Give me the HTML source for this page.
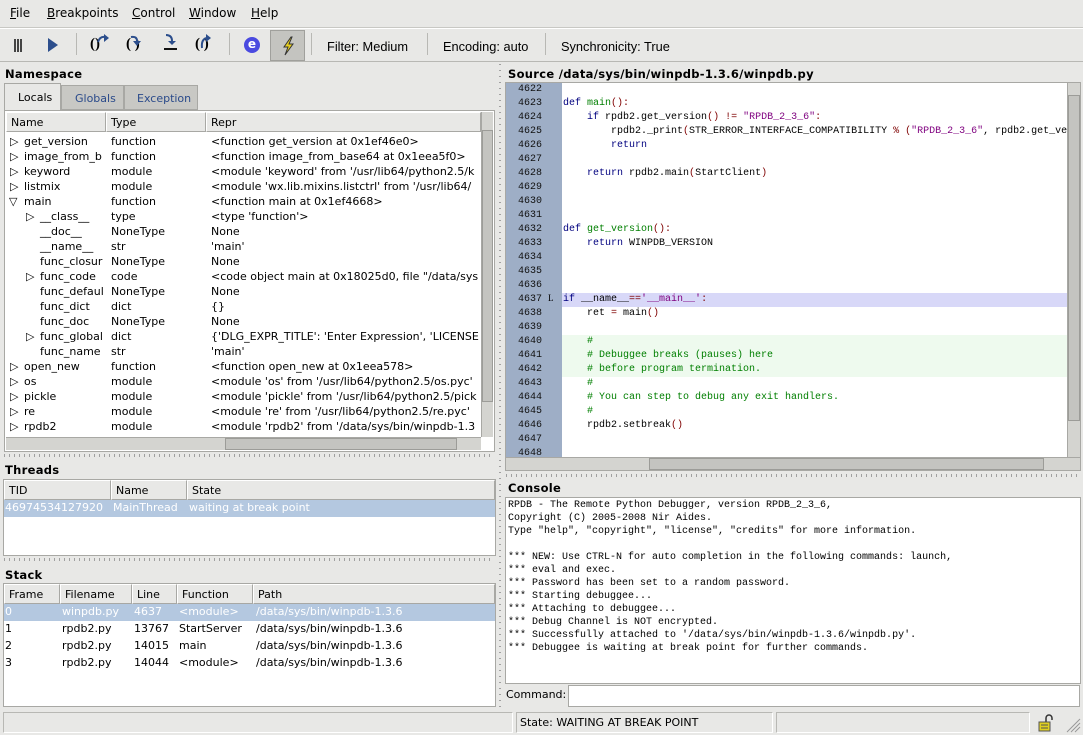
<!DOCTYPE html>
<html><head><meta charset="utf-8"><style>
*{margin:0;padding:0;box-sizing:border-box}
body{width:1083px;height:735px;overflow:hidden;background:#e8e8e6;font-family:"DejaVu Sans","Liberation Sans",sans-serif;font-size:11px;color:#000;position:relative}
.a{position:absolute;white-space:nowrap}
.m{font-family:"Liberation Mono",monospace;font-size:10px}
.hd{position:absolute;height:20px;background:#e8e8e6;border:1px solid #a8a8a4;border-left-color:#fff;border-top-color:#fff;padding:3px 4px;white-space:nowrap;overflow:hidden}
.tb{font-weight:bold;font-size:11.5px;letter-spacing:.3px}
.sep{position:absolute;width:1px;background:#b8b8b4}
.dots{position:absolute;height:3px;background:repeating-linear-gradient(90deg,#a0a0a0 0 1px,transparent 1px 5px)}
.vd{position:absolute;width:2px;background:repeating-linear-gradient(180deg,#a0a0a0 0 1px,transparent 1px 6px)}
.r{position:absolute;left:0;height:15px;width:480px}
.r span{position:absolute;top:0;white-space:nowrap}
u{text-decoration:underline}
.kw{color:#00007f}.fn{color:#007f00}.st{color:#7f007f}.op{color:#7f0000}.cm{color:#007f00}
</style></head><body>
<div class="a" style="left:10px;top:6px;font-size:12px"><u>F</u>ile</div>
<div class="a" style="left:47px;top:6px;font-size:12px"><u>B</u>reakpoints</div>
<div class="a" style="left:132px;top:6px;font-size:12px"><u>C</u>ontrol</div>
<div class="a" style="left:189px;top:6px;font-size:12px"><u>W</u>indow</div>
<div class="a" style="left:251px;top:6px;font-size:12px"><u>H</u>elp</div>
<div class="a" style="left:0;top:27px;width:1083px;height:1px;background:#c8c8c4"></div>
<div class="a" style="left:0;top:28px;width:1083px;height:1px;background:#fff"></div>
<div class="a" style="left:14px;top:39px;width:8px;height:13px;background:repeating-linear-gradient(90deg,#444 0 2px,transparent 2px 3px)"></div>
<svg class="a" style="left:46px;top:37px" width="14" height="16"><path d="M2 1 L12 8 L2 15Z" fill="#2c4e8c"/></svg>
<div class="sep" style="left:76px;top:33px;height:22px"></div>
<div class="a" style="left:90px;top:36px;font-family:'Liberation Serif';font-weight:bold;font-size:15px">()</div>
<svg class="a" style="left:96px;top:34px" width="14" height="12"><path d="M2 8 Q4 2 9 3" stroke="#2c4e8c" stroke-width="2" fill="none"/><path d="M8 0 L13 4 L8 8Z" fill="#2c4e8c"/></svg>
<div class="a" style="left:126px;top:36px;font-family:'Liberation Serif';font-weight:bold;font-size:15px">( )</div>
<svg class="a" style="left:129px;top:34px" width="12" height="14"><path d="M2 3 Q8 2 8 7" stroke="#2c4e8c" stroke-width="2" fill="none"/><path d="M4 7 L12 7 L8 12Z" fill="#2c4e8c"/></svg>
<svg class="a" style="left:162px;top:34px" width="16" height="18"><path d="M4 1 Q10 1 10 7" stroke="#2c4e8c" stroke-width="2" fill="none"/><path d="M6 7 L14 7 L10 11Z" fill="#2c4e8c"/><rect x="2" y="14" width="13" height="2" fill="#111"/></svg>
<div class="a" style="left:195px;top:36px;font-family:'Liberation Serif';font-weight:bold;font-size:15px">(&nbsp;)</div>
<svg class="a" style="left:198px;top:34px" width="14" height="16"><path d="M4 14 Q3 5 9 4" stroke="#2c4e8c" stroke-width="2" fill="none"/><path d="M8 0 L13 4 L8 8Z" fill="#2c4e8c"/></svg>
<div class="sep" style="left:229px;top:33px;height:22px"></div>
<div class="a" style="left:244px;top:37px;width:16px;height:16px;border-radius:50%;background:#4a4ae0;color:#fff;font-weight:bold;font-size:12px;text-align:center;line-height:15px">e</div>
<div class="a" style="left:270px;top:30px;width:35px;height:31px;background:#c4c4c0;border:1px solid #a0a09c"></div>
<svg class="a" style="left:280px;top:36px" width="16" height="20"><path d="M11 1 L4 11 L8 11 L5 19 L13 8 L9 8 L12 1Z" fill="#e8d020" stroke="#333" stroke-width="1"/></svg>
<div class="sep" style="left:311px;top:33px;height:22px"></div>
<div class="a" style="left:327px;top:39px;font-family:'Liberation Sans';font-size:12.8px">Filter: Medium</div>
<div class="sep" style="left:427px;top:33px;height:22px"></div>
<div class="a" style="left:443px;top:39px;font-family:'Liberation Sans';font-size:12.8px">Encoding: auto</div>
<div class="sep" style="left:545px;top:33px;height:22px"></div>
<div class="a" style="left:561px;top:39px;font-family:'Liberation Sans';font-size:12.8px">Synchronicity: True</div>
<div class="a" style="left:0;top:61px;width:1083px;height:1px;background:#b8b8b4"></div>
<div class="vd" style="left:499px;top:64px;height:645px"></div>

<div class="a tb" style="left:5px;top:67px">Namespace</div>
<div class="a" style="left:4px;top:83px;width:57px;height:28px;background:#e8e8e6;border:1px solid #a8a8a4;border-bottom:none;padding:7px 0 0 13px">Locals</div>
<div class="a" style="left:61px;top:85px;width:63px;height:25px;background:#c8c8c4;border:1px solid #a8a8a4;color:#2a4a8a;padding:6px 0 0 13px">Globals</div>
<div class="a" style="left:124px;top:85px;width:74px;height:25px;background:#c8c8c4;border:1px solid #a8a8a4;color:#2a4a8a;padding:6px 0 0 12px">Exception</div>
<div class="a" style="left:4px;top:110px;width:491px;height:342px;border:1px solid #a8a8a4;background:#fff"></div>
<div class="hd" style="left:6px;top:112px;width:100px">Name</div>
<div class="hd" style="left:106px;top:112px;width:100px">Type</div>
<div class="hd" style="left:206px;top:112px;width:275px">Repr</div>
<div class="a" style="left:6px;top:132px;width:475px;height:305px;overflow:hidden">
<div class="r" style="top:3px"><span style="left:4px">▷</span><span style="left:18px">get_version</span><span style="left:105px">function</span><span style="left:205px">&lt;function get_version at 0x1ef46e0&gt;</span></div>
<div class="r" style="top:18px"><span style="left:4px">▷</span><span style="left:18px">image_from_b</span><span style="left:105px">function</span><span style="left:205px">&lt;function image_from_base64 at 0x1eea5f0&gt;</span></div>
<div class="r" style="top:33px"><span style="left:4px">▷</span><span style="left:18px">keyword</span><span style="left:105px">module</span><span style="left:205px">&lt;module 'keyword' from '/usr/lib64/python2.5/k</span></div>
<div class="r" style="top:48px"><span style="left:4px">▷</span><span style="left:18px">listmix</span><span style="left:105px">module</span><span style="left:205px">&lt;module 'wx.lib.mixins.listctrl' from '/usr/lib64/</span></div>
<div class="r" style="top:63px"><span style="left:3px">▽</span><span style="left:18px">main</span><span style="left:105px">function</span><span style="left:205px">&lt;function main at 0x1ef4668&gt;</span></div>
<div class="r" style="top:78px"><span style="left:20px">▷</span><span style="left:34px">__class__</span><span style="left:105px">type</span><span style="left:205px">&lt;type 'function'&gt;</span></div>
<div class="r" style="top:93px"><span style="left:34px">__doc__</span><span style="left:105px">NoneType</span><span style="left:205px">None</span></div>
<div class="r" style="top:108px"><span style="left:34px">__name__</span><span style="left:105px">str</span><span style="left:205px">'main'</span></div>
<div class="r" style="top:123px"><span style="left:34px">func_closur</span><span style="left:105px">NoneType</span><span style="left:205px">None</span></div>
<div class="r" style="top:138px"><span style="left:20px">▷</span><span style="left:34px">func_code</span><span style="left:105px">code</span><span style="left:205px">&lt;code object main at 0x18025d0, file "/data/sys</span></div>
<div class="r" style="top:153px"><span style="left:34px">func_defaul</span><span style="left:105px">NoneType</span><span style="left:205px">None</span></div>
<div class="r" style="top:168px"><span style="left:34px">func_dict</span><span style="left:105px">dict</span><span style="left:205px">{}</span></div>
<div class="r" style="top:183px"><span style="left:34px">func_doc</span><span style="left:105px">NoneType</span><span style="left:205px">None</span></div>
<div class="r" style="top:198px"><span style="left:20px">▷</span><span style="left:34px">func_global</span><span style="left:105px">dict</span><span style="left:205px">{'DLG_EXPR_TITLE': 'Enter Expression', 'LICENSE</span></div>
<div class="r" style="top:213px"><span style="left:34px">func_name</span><span style="left:105px">str</span><span style="left:205px">'main'</span></div>
<div class="r" style="top:228px"><span style="left:4px">▷</span><span style="left:18px">open_new</span><span style="left:105px">function</span><span style="left:205px">&lt;function open_new at 0x1eea578&gt;</span></div>
<div class="r" style="top:243px"><span style="left:4px">▷</span><span style="left:18px">os</span><span style="left:105px">module</span><span style="left:205px">&lt;module 'os' from '/usr/lib64/python2.5/os.pyc'</span></div>
<div class="r" style="top:258px"><span style="left:4px">▷</span><span style="left:18px">pickle</span><span style="left:105px">module</span><span style="left:205px">&lt;module 'pickle' from '/usr/lib64/python2.5/pick</span></div>
<div class="r" style="top:273px"><span style="left:4px">▷</span><span style="left:18px">re</span><span style="left:105px">module</span><span style="left:205px">&lt;module 're' from '/usr/lib64/python2.5/re.pyc'</span></div>
<div class="r" style="top:288px"><span style="left:4px">▷</span><span style="left:18px">rpdb2</span><span style="left:105px">module</span><span style="left:205px">&lt;module 'rpdb2' from '/data/sys/bin/winpdb-1.3</span></div>
</div>
<div class="a" style="left:481px;top:112px;width:12px;height:325px;background:#d4d4d0;border-left:1px solid #a8a8a4"></div>
<div class="a" style="left:482px;top:130px;width:11px;height:272px;background:#c4c4c0;border:1px solid #9c9c98"></div>
<div class="a" style="left:6px;top:437px;width:475px;height:13px;background:#d4d4d0;border-top:1px solid #a8a8a4"></div>
<div class="a" style="left:225px;top:438px;width:232px;height:12px;background:#c4c4c0;border:1px solid #9c9c98"></div>
<div class="dots" style="left:4px;top:454px;width:490px"></div>

<div class="a tb" style="left:5px;top:463px">Threads</div>
<div class="a" style="left:3px;top:479px;width:493px;height:77px;background:#fff;border:1px solid #a8a8a4"></div>
<div class="hd" style="left:4px;top:480px;width:107px">TID</div>
<div class="hd" style="left:111px;top:480px;width:76px">Name</div>
<div class="hd" style="left:187px;top:480px;width:308px">State</div>
<div class="a" style="left:4px;top:500px;width:491px;height:17px;background:#b4c8e0;color:#fff;padding:1px 0 0 1px">46974534127920<span style="position:absolute;left:109px">MainThread</span><span style="position:absolute;left:185px">waiting at break point</span></div>
<div class="dots" style="left:4px;top:558px;width:490px"></div>

<div class="a tb" style="left:5px;top:568px">Stack</div>
<div class="a" style="left:3px;top:583px;width:493px;height:124px;background:#fff;border:1px solid #a8a8a4"></div>
<div class="hd" style="left:4px;top:584px;width:56px">Frame</div>
<div class="hd" style="left:60px;top:584px;width:72px">Filename</div>
<div class="hd" style="left:132px;top:584px;width:45px">Line</div>
<div class="hd" style="left:177px;top:584px;width:76px">Function</div>
<div class="hd" style="left:253px;top:584px;width:242px">Path</div>
<div class="a" style="left:4px;top:604px;width:491px;height:17px;background:#b4c8e0"></div>
<div class="a" style="left:5px;top:605px;width:480px;color:#fff"><span class="a" style="left:0">0</span><span class="a" style="left:57px">winpdb.py</span><span class="a" style="left:129px">4637</span><span class="a" style="left:174px">&lt;module&gt;</span><span class="a" style="left:251px">/data/sys/bin/winpdb-1.3.6</span></div>
<div class="a" style="left:5px;top:622px;width:480px"><span class="a" style="left:0">1</span><span class="a" style="left:57px">rpdb2.py</span><span class="a" style="left:129px">13767</span><span class="a" style="left:174px">StartServer</span><span class="a" style="left:251px">/data/sys/bin/winpdb-1.3.6</span></div>
<div class="a" style="left:5px;top:639px;width:480px"><span class="a" style="left:0">2</span><span class="a" style="left:57px">rpdb2.py</span><span class="a" style="left:129px">14015</span><span class="a" style="left:174px">main</span><span class="a" style="left:251px">/data/sys/bin/winpdb-1.3.6</span></div>
<div class="a" style="left:5px;top:656px;width:480px"><span class="a" style="left:0">3</span><span class="a" style="left:57px">rpdb2.py</span><span class="a" style="left:129px">14044</span><span class="a" style="left:174px">&lt;module&gt;</span><span class="a" style="left:251px">/data/sys/bin/winpdb-1.3.6</span></div>

<div class="a tb" style="left:508px;top:67px">Source /data/sys/bin/winpdb-1.3.6/winpdb.py</div>
<div class="a" style="left:505px;top:82px;width:576px;height:389px;background:#fff;border:1px solid #a8a8a4;overflow:hidden">
<div class="a" style="left:0;top:0;width:56px;height:375px;background:#9eaec6"></div>
<div class="a" style="left:56px;top:210px;width:506px;height:14px;background:#d8d8f8"></div>
<div class="a" style="left:56px;top:252px;width:506px;height:42px;background:#eefaee"></div>
<div class="a" style="left:42px;top:210px;font-size:9px;font-family:'Liberation Serif'">L</div>
<div class="a m" style="left:12px;top:0;line-height:14px;color:#111">4622<br>4623<br>4624<br>4625<br>4626<br>4627<br>4628<br>4629<br>4630<br>4631<br>4632<br>4633<br>4634<br>4635<br>4636<br>4637<br>4638<br>4639<br>4640<br>4641<br>4642<br>4643<br>4644<br>4645<br>4646<br>4647<br>4648</div>
<div class="a m" style="left:57px;top:0;line-height:14px;white-space:pre">
<span class="kw">def</span> <span class="fn">main</span><span class="op">():</span>
    <span class="kw">if</span> rpdb2.get_version<span class="op">()</span> <span class="op">!=</span> <span class="st">"RPDB_2_3_6"</span><span class="op">:</span>
        rpdb2._print<span class="op">(</span>STR_ERROR_INTERFACE_COMPATIBILITY <span class="op">%</span> <span class="op">(</span><span class="st">"RPDB_2_3_6"</span>, rpdb2.get_ve
        <span class="kw">return</span>

    <span class="kw">return</span> rpdb2.main<span class="op">(</span>StartClient<span class="op">)</span>



<span class="kw">def</span> <span class="fn">get_version</span><span class="op">():</span>
    <span class="kw">return</span> WINPDB_VERSION



<span class="kw">if</span> __name__<span class="op">==</span><span class="st">'__main__'</span><span class="op">:</span>
    ret <span class="op">=</span> main<span class="op">()</span>

    <span class="cm">#</span>
    <span class="cm"># Debuggee breaks (pauses) here</span>
    <span class="cm"># before program termination.</span>
    <span class="cm">#</span>
    <span class="cm"># You can step to debug any exit handlers.</span>
    <span class="cm">#</span>
    rpdb2.setbreak<span class="op">()</span>
</div>
<div class="a" style="left:561px;top:0;width:13px;height:375px;background:#d4d4d0;border-left:1px solid #a8a8a4"></div>
<div class="a" style="left:562px;top:12px;width:12px;height:326px;background:#c4c4c0;border:1px solid #9c9c98"></div>
<div class="a" style="left:0;top:374px;width:576px;height:14px;background:#d4d4d0;border-top:1px solid #a8a8a4"></div>
<div class="a" style="left:143px;top:375px;width:395px;height:12px;background:#c4c4c0;border:1px solid #9c9c98"></div>
</div>
<div class="dots" style="left:506px;top:474px;width:575px"></div>

<div class="a tb" style="left:508px;top:481px">Console</div>
<div class="a" style="left:505px;top:497px;width:576px;height:187px;background:#fff;border:1px solid #a8a8a4"></div>
<div class="a" style="left:508px;top:499px;font-family:'Liberation Mono',monospace;font-size:10px;line-height:13px;white-space:pre">RPDB - The Remote Python Debugger, version RPDB_2_3_6,
Copyright (C) 2005-2008 Nir Aides.
Type "help", "copyright", "license", "credits" for more information.

*** NEW: Use CTRL-N for auto completion in the following commands: launch,
*** eval and exec.
*** Password has been set to a random password.
*** Starting debuggee...
*** Attaching to debuggee...
*** Debug Channel is NOT encrypted.
*** Successfully attached to '/data/sys/bin/winpdb-1.3.6/winpdb.py'.
*** Debuggee is waiting at break point for further commands.</div>
<div class="a" style="left:506px;top:688px">Command:</div>
<div class="a" style="left:568px;top:685px;width:512px;height:22px;background:#fff;border:1px solid #a8a8a4"></div>

<div class="a" style="left:3px;top:712px;width:510px;height:21px;border:1px solid #b8b8b4;border-right-color:#fff;border-bottom-color:#fff"></div>
<div class="a" style="left:516px;top:712px;width:257px;height:21px;border:1px solid #b8b8b4;border-right-color:#fff;border-bottom-color:#fff;padding:3px 0 0 3px">State: WAITING AT BREAK POINT</div>
<div class="a" style="left:776px;top:712px;width:254px;height:21px;border:1px solid #b8b8b4;border-right-color:#fff;border-bottom-color:#fff"></div>
<svg class="a" style="left:1038px;top:714px" width="18" height="18"><path d="M8 8 V4 a3 3 0 0 1 6 0 V6" stroke="#333" stroke-width="1.5" fill="none"/><rect x="1" y="8" width="11" height="9" fill="#e0d020" stroke="#555"/><path d="M3 11h7M3 14h7" stroke="#555"/></svg>
<svg class="a" style="left:1065px;top:717px" width="16" height="16"><path d="M15 2 L2 15 M15 6 L6 15 M15 10 L10 15" stroke="#999" stroke-width="1"/></svg>
</body></html>
